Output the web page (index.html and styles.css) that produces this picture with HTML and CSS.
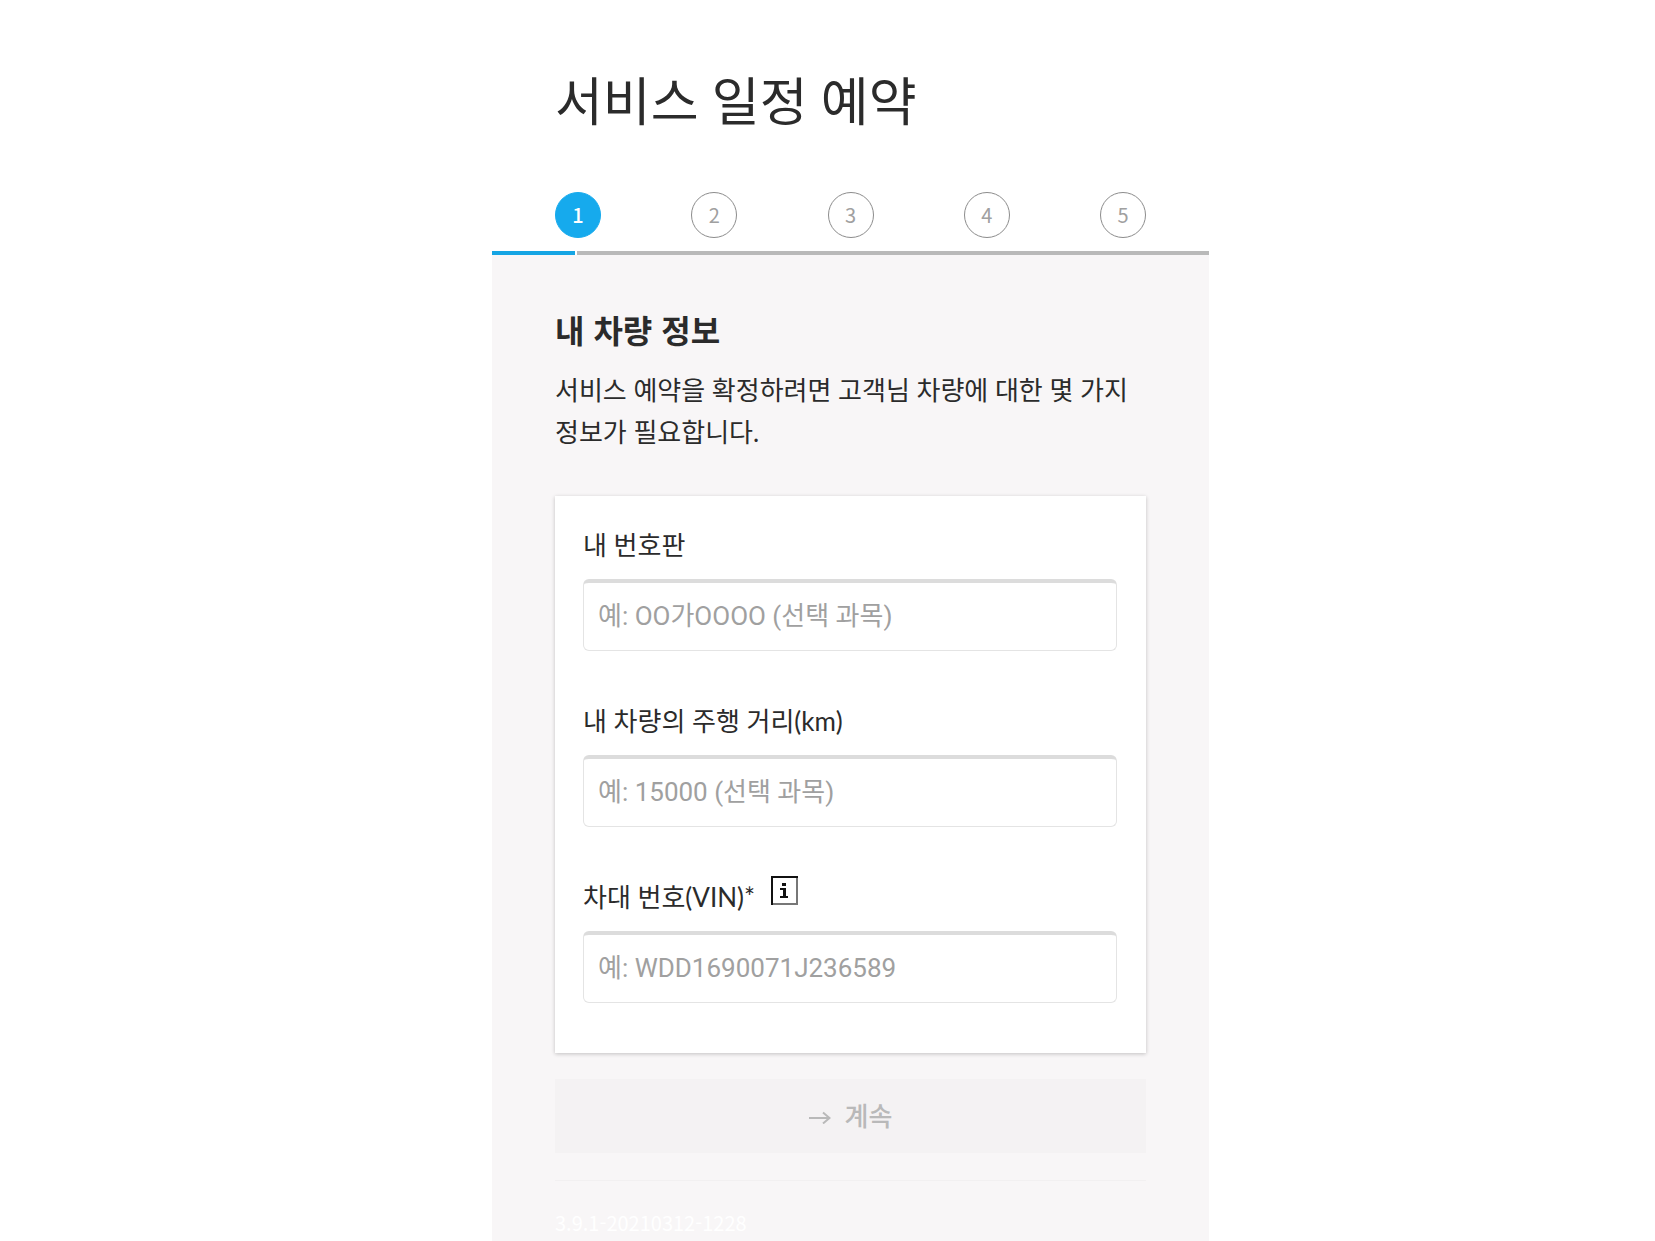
FILE: index.html
```html
<!DOCTYPE html>
<html lang="ko">
<head>
<meta charset="utf-8">
<meta name="viewport" content="width=device-width, initial-scale=1">
<title>서비스 일정 예약</title>
<link rel="stylesheet" href="styles.css">
</head>
<body>
<main class="booking">
  <header class="booking-header">
    <h1 class="title">서비스 일정 예약</h1>
    <ol class="steps">
      <li class="step step-active" aria-current="step">1</li>
      <li class="step">2</li>
      <li class="step">3</li>
      <li class="step">4</li>
      <li class="step">5</li>
    </ol>
  </header>
  <div class="progress"><span class="progress-done"></span><span class="progress-rest"></span></div>
  <form class="content">
    <h2 class="section-title">내 차량 정보</h2>
    <p class="intro">서비스 예약을 확정하려면 고객님 차량에 대한 몇 가지 정보가 필요합니다.</p>
    <div class="card">
      <div class="field">
        <div class="label-row"><label for="plate">내 번호판</label></div>
        <input class="input" id="plate" type="text" placeholder="예: OO가OOOO (선택 과목)">
      </div>
      <div class="field">
        <div class="label-row"><label for="mileage">내 차량의 주행 거리(km)</label></div>
        <input class="input" id="mileage" type="text" placeholder="예: 15000 (선택 과목)">
      </div>
      <div class="field">
        <div class="label-row">
          <label for="vin">차대 번호(VIN)*</label>
          <button class="info" type="button" aria-label="차대 번호 안내">
            <svg width="27" height="29" viewBox="0 0 27 29">
              <rect x="1" y="1" width="25" height="27" fill="#fff" stroke="#777" stroke-width="2"/>
              <path d="M1 29V1H27" fill="none" stroke="#111" stroke-width="2"/>
              <path d="M11 7h4v3h-4zM9 12h6v8h2v2H9v-2h3v-6H9z" fill="#111"/>
            </svg>
          </button>
        </div>
        <input class="input" id="vin" type="text" placeholder="예: WDD1690071J236589" required>
      </div>
    </div>
    <button class="submit" type="submit" disabled>
      <svg width="22" height="18" viewBox="0 0 22 18" fill="none" stroke="#b9b9b9" stroke-width="2"><path d="M0 12H20M14 6.500L20.500 12L14 17.500"/></svg>
      <span>계속</span>
    </button>
    <footer class="version">3.9.1-20210312-1228</footer>
  </form>
</main>
</body>
</html>
```
FILE: styles.css
```css
* {
  box-sizing: border-box;
}

body {
  margin: 0;
  min-height: 100vh;
  display: flex;
  justify-content: center;
  padding-left: 46px;
  background: #fff;
  color: #2b2b2b;
  font-family: "Noto Sans CJK KR", sans-serif;
  font-size: 26px;
}

.booking {
  width: 100%;
  max-width: 717px;
  display: flex;
  flex-direction: column;
}

.booking-header {
  padding: 63px 63px 13px;
}

.title {
  margin: 0 0 53px;
  font-family: Lato, "Noto Sans CJK KR", sans-serif;
  font-size: 52px;
  line-height: 76px;
  font-weight: 400;
}

.steps {
  display: flex;
  justify-content: space-between;
  margin: 0;
  padding: 0;
  list-style: none;
}

.step {
  width: 46px;
  height: 46px;
  border: 1px solid #8c8c8c;
  border-radius: 50%;
  color: #a0a0a0;
  font-size: 20px;
  line-height: 44px;
  text-align: center;
}

.step-active {
  border-color: #16aaed;
  background: #16aaed;
  color: #fff;
  font-weight: 500;
}

.progress {
  display: flex;
  gap: 2px;
  height: 4px;
}

.progress-done {
  width: 83px;
  background: #16a5e4;
}

.progress-rest {
  flex: 1;
  background: #b9b9b9;
}

.content {
  flex: 1;
  padding: 50px 63px 0;
  background: #f8f6f7;
}

.section-title {
  margin: 0;
  font-size: 32px;
  line-height: 48px;
  font-weight: 700;
}

.intro {
  margin: 16px 0 43px;
  font-family: Lato, "Noto Sans CJK KR", sans-serif;
  line-height: 42px;
}

.card {
  display: flex;
  flex-direction: column;
  gap: 52px;
  padding: 31px 29px 50px 28px;
  background: #fff;
  box-shadow: 0 1px 4px rgba(0, 0, 0, 0.22);
}

.label-row {
  display: flex;
  gap: 16px;
  height: 40px;
  margin-bottom: 12px;
  font-family: Lato, "Noto Sans CJK KR", sans-serif;
  line-height: 36px;
}

.info {
  height: 28px;
  margin-top: -3px;
  padding: 0;
  border: 0;
  background: none;
}

.info svg {
  display: block;
}

.input {
  display: block;
  width: 100%;
  height: 72px;
  padding: 0 14px 2px;
  border: 1px solid #e4e4e4;
  border-top: 4px solid #dcdcdc;
  border-radius: 6px;
  background: #fff;
  color: #2b2b2b;
  font-family: Roboto, "Noto Sans CJK KR", sans-serif;
  font-size: 26px;
}

.input::placeholder {
  color: #a0a0a0;
  opacity: 1;
}

.submit {
  display: flex;
  align-items: center;
  justify-content: center;
  gap: 14px;
  width: 100%;
  height: 74px;
  margin: 26px 0 27px;
  padding-bottom: 4px;
  border: 0;
  background: #f4f2f3;
  color: #b9b9b9;
  font: inherit;
  font-weight: 500;
}

.version {
  padding-top: 27px;
  border-top: 1px solid #f2f0f1;
  color: #fff;
  font-size: 20px;
  line-height: 30px;
}
```
